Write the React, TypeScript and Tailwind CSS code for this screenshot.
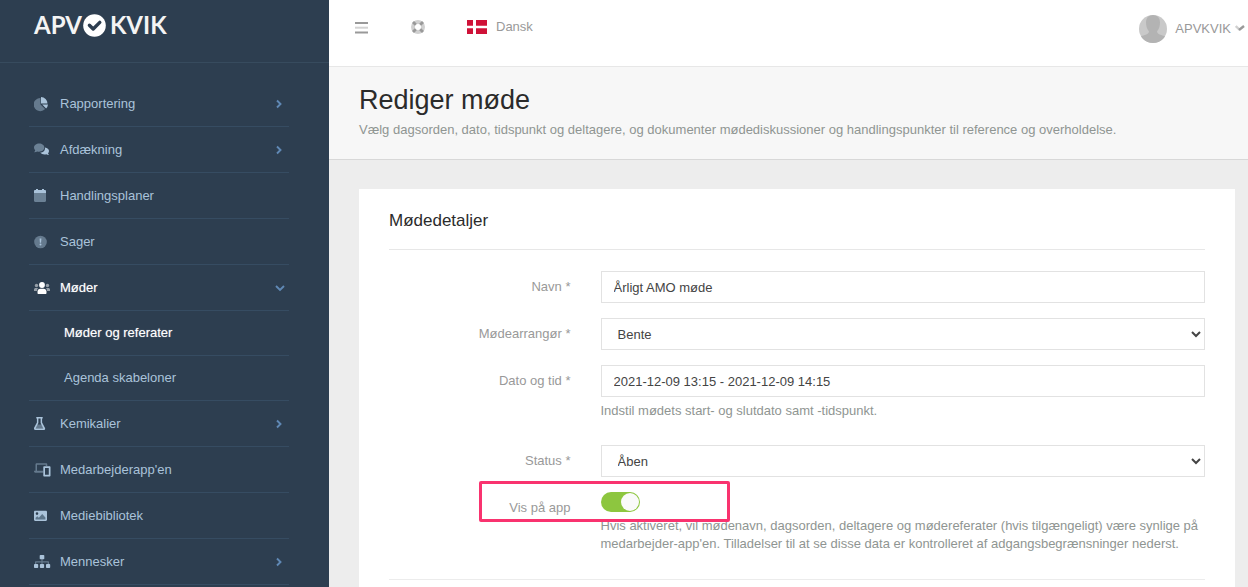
import React, { useState } from "react";

interface NavItem {
  label: string;
  icon?: React.ReactNode;
  arrow?: "right" | "down";
  active?: boolean;
  sub?: boolean;
}

const icon = {
  width: 18,
  height: 16,
  viewBox: "0 0 18 16",
  fill: "currentColor",
  "aria-hidden": true,
};

const PieIcon = () => (
  <svg {...icon}>
    <path opacity="0.45" d="M6.5 2v6.5l4.6 4.6A6.6 6.6 0 1 1 6.5 2z" />
    <path d="M7 1a6.500 6.500 0 0 1 6.500 6.500H7z" />
    <path d="M8.200 8.600h5.800a6.200 6.200 0 0 1-1.900 3.900z" />
  </svg>
);

const CommentsIcon = () => (
  <svg {...icon}>
    <path d="M11 5.400c2.300.3 4 1.800 4 3.700 0 .9-.4 1.700-1 2.300.2.600.6 1.100 1.100 1.600-1 .1-2-.2-2.800-.7-2.400.6-4.900-.1-6-1.700 3-.1 5-2.200 4.700-5.200z" />
    <path
      opacity="0.5"
      d="M5.200 1.500c2.900 0 5.200 1.800 5.200 4.100S8.100 9.700 5.200 9.700c-.7 0-1.400-.1-2-.3-.8.6-1.900.9-3.100.8.6-.6 1-1.200 1.100-1.900C.4 7.600 0 6.600 0 5.600c0-2.300 2.300-4.100 5.200-4.100z"
    />
  </svg>
);

const CalendarIcon = () => (
  <svg {...icon}>
    <path opacity="0.5" d="M0 5h12v7.800c0 .7-.5 1.200-1.200 1.200H1.200C.5 14 0 13.500 0 12.800z" />
    <path d="M0 5V3.200C0 2.500.5 2 1.200 2H2V1h2v1h4V1h2v1h.8c.7 0 1.200.5 1.200 1.200V5z" />
  </svg>
);

const AlertIcon = () => (
  <svg {...icon}>
    <circle opacity="0.45" cx="6.500" cy="8" r="6.300" />
    <path d="M5.600 4.500h1.800l-.3 4.200H5.900z" />
    <circle cx="6.500" cy="10.500" r="1" />
  </svg>
);

const UsersIcon = () => (
  <svg {...icon}>
    <g opacity="0.5">
      <circle cx="2.500" cy="5.500" r="1.700" />
      <circle cx="13.500" cy="5.500" r="1.700" />
      <path d="M0 11V9.500C0 8.500.8 8 1.600 8h1.800l.7.300C3.200 9 3 10 2.900 11z" />
      <path d="M16 11V9.500c0-1-.8-1.500-1.600-1.500h-1.800l-.7.300c.9.700 1.100 1.700 1.200 2.700z" />
    </g>
    <circle cx="8" cy="5" r="2.900" />
    <path d="M3.500 13v-1.500c0-1.700 1.300-2.800 2.800-2.800h3.400c1.500 0 2.800 1.100 2.800 2.800V13c0 .6-.4 1-1 1h-7c-.6 0-1-.4-1-1z" />
  </svg>
);

const FlaskIcon = () => (
  <svg {...icon}>
    <path opacity="0.45" d="M3.500 8.500h4.300l2 4.200H1.500z" />
    <path
      fillRule="evenodd"
      d="M2.300 1h6.400v1.600h-.6v4l2.800 5.200c.7 1.200-.1 2.200-1.300 2.200H1.400c-1.200 0-2-1-1.300-2.200l2.800-5.200v-4h-.6zM4.400 2.600V7L1.700 12.400h7.600L6.600 7V2.600z"
    />
  </svg>
);

const DevicesIcon = () => (
  <svg {...icon}>
    <path
      opacity="0.45"
      d="M1.500 8.700V2.500C1.500 1.700 2 1.200 2.800 1.200h9.200c.8 0 1.300.5 1.300 1.300V4h-1.600V2.800H3v5.900h6.200v2.100H1.600C.7 10.800 0 10 0 9.200v-.5z"
    />
    <path
      fillRule="evenodd"
      d="M10.300 4.300h5.200c.6 0 1 .4 1 1v8.200c0 .6-.4 1-1 1h-5.200c-.6 0-1-.4-1-1V5.300c0-.6.4-1 1-1zM11 6v6.800h3.800V6z"
    />
  </svg>
);

const ImageIcon = () => (
  <svg {...icon}>
    <path
      fillRule="evenodd"
      d="M1.200 2.800h10.600c.7 0 1.200.5 1.200 1.200v7.800c0 .7-.5 1.200-1.200 1.200H1.200C.5 13 0 12.500 0 11.800V4c0-.7.5-1.200 1.200-1.200zM3 4.300a1.300 1.300 0 1 0 0 2.600 1.300 1.300 0 0 0 0-2.600z"
    />
    <path fill="#5d768b" d="M1.600 11.400V9.800l1.700-1.600 1.500 1.500 3.400-3.600 3.200 3.300v2z" />
  </svg>
);

const SitemapIcon = () => (
  <svg {...icon}>
    <path opacity="0.45" d="M7.400 5h1.200v2.300H14c.6 0 1 .4 1 1V10h-1.300V8.500H8.600V10H7.400V8.500H2.300V10H1V8.300c0-.6.400-1 1-1h5.400z" />
    <rect x="5.700" y="1" width="4.600" height="4.300" rx="0.800" />
    <rect x="0" y="10" width="4.200" height="4" rx="0.800" />
    <rect x="5.900" y="10" width="4.200" height="4" rx="0.800" />
    <rect x="12" y="10" width="4.200" height="4" rx="0.800" />
  </svg>
);

const NAV_ITEMS: NavItem[] = [
  { label: "Rapportering", icon: <PieIcon />, arrow: "right" },
  { label: "Afdækning", icon: <CommentsIcon />, arrow: "right" },
  { label: "Handlingsplaner", icon: <CalendarIcon /> },
  { label: "Sager", icon: <AlertIcon /> },
  { label: "Møder", icon: <UsersIcon />, arrow: "down", active: true },
  { label: "Møder og referater", active: true, sub: true },
  { label: "Agenda skabeloner", sub: true },
  { label: "Kemikalier", icon: <FlaskIcon />, arrow: "right" },
  { label: "Medarbejderapp'en", icon: <DevicesIcon /> },
  { label: "Mediebibliotek", icon: <ImageIcon /> },
  { label: "Mennesker", icon: <SitemapIcon />, arrow: "right" },
];

function Arrow({ direction }: { direction: "right" | "down" }) {
  return (
    <svg
      width="10"
      height="10"
      viewBox="0 0 10 10"
      fill="none"
      stroke="#6089b5"
      strokeWidth="1.900"
      className="shrink-0"
      aria-hidden
    >
      <path d={direction === "right" ? "M2 1.500 5.500 5 2 8.500" : "M1 3 5 7 9 3"} />
    </svg>
  );
}

function Logo() {
  return (
    <a
      href="#"
      className="flex items-center font-[Lato,sans-serif] text-2xl leading-8 font-bold text-[#f4f4f4]"
    >
      APV
      <svg width="23" height="23" viewBox="0 0 23 23" className="mx-px" aria-hidden>
        <circle cx="11.500" cy="11.500" r="11.300" fill="#fff" />
        <path
          d="m6.400 11.200 3.800 3.800 6.600-6.600"
          fill="none"
          stroke="#2d3e50"
          strokeWidth="3.400"
          strokeLinecap="round"
          strokeLinejoin="round"
        />
      </svg>
      <span className="ml-[3px]">KVIK</span>
    </a>
  );
}

function Sidebar() {
  return (
    <aside className="w-[329px] shrink-0 bg-[#2d3e50]">
      <div className="border-b border-[#374b5e] px-[34px] pt-[9px] pb-[21px]">
        <Logo />
      </div>
      <nav className="pt-[18px] pr-10 pl-[29px]">
        <ul>
          {NAV_ITEMS.map((item) => (
            <li key={item.label} className="border-b border-[#364c62]">
              <a
                href="#"
                className={`flex items-center pr-1 ${
                  item.sub ? "h-11 pl-[35px]" : "h-[45px] pl-[5px]"
                } ${item.active ? "text-white [text-shadow:0_0_1px_#ffffff80]" : "text-[#aac3da]"}`}
              >
                {item.icon && <span className="w-[26px] shrink-0">{item.icon}</span>}
                <span className="grow">{item.label}</span>
                {item.arrow && <Arrow direction={item.arrow} />}
              </a>
            </li>
          ))}
        </ul>
      </nav>
    </aside>
  );
}

function TopBar() {
  return (
    <header className="flex items-start justify-between border-b border-[#e7e7e7] bg-white pr-[3px] pb-[23px] pl-[26px] text-[#999]">
      <div className="flex items-center pt-[17px]">
        <button type="button" aria-label="Menu" className="mr-[42px]">
          <svg width="14" height="14" viewBox="0 0 14 14" aria-hidden>
            <path d="M0 3h13M0 12.500h13" stroke="#999" strokeWidth="2" />
            <path d="M0 7.700h13" stroke="#d3d3d3" strokeWidth="2" />
          </svg>
        </button>
        <button type="button" aria-label="Hjælp" className="mr-[42px]">
          <svg width="14" height="14" viewBox="0 0 14 14" fill="none" aria-hidden>
            <circle cx="7" cy="7" r="5" stroke="#d0d0d0" strokeWidth="4" />
            <path
              d="m2 2 2.800 2.800M12 2 9.200 4.800M2 12l2.800-2.800M12 12 9.200 9.200"
              stroke="#999"
              strokeWidth="2.800"
            />
          </svg>
        </button>
        <button type="button" className="flex items-center gap-[9px] leading-5">
          <svg width="20" height="14" viewBox="0 0 20 14" aria-hidden>
            <path fill="#cf1238" d="M0 0h20v14H0z" />
            <path fill="#fff" d="M6 0h3v14H6zM0 5.800h20v2.400H0z" />
          </svg>
          Dansk
        </button>
      </div>
      <button type="button" className="flex items-center gap-1 pt-[15px]">
        <svg width="28" height="28" viewBox="0 0 28 28" className="mr-1" aria-hidden>
          <defs>
            <clipPath id="avatar">
              <circle cx="14" cy="14" r="14" />
            </clipPath>
          </defs>
          <g clipPath="url(#avatar)">
            <path fill="#c9c9c9" d="M0 0h28v28H0z" />
            <path
              fill="#b3b3b3"
              d="M14 0c4.500 0 7 3 7 7.500 0 3.500-1 6.500-3 9 .2 2.500 3.500 3.500 6.500 4.200l3.500 1.300v6H0v-6l3.500-1.300c3-.7 6.300-1.700 6.500-4.200-2-2.500-3-5.500-3-9C7 3 9.500 0 14 0z"
            />
          </g>
        </svg>
        APVKVIK
        <svg width="10" height="10" viewBox="0 0 10 10" fill="none" strokeWidth="2.400" aria-hidden>
          <path d="m.8 2 4 4" stroke="#d0d0d0" />
          <path d="m4 6 5-4" stroke="#999" />
        </svg>
      </button>
    </header>
  );
}

interface FieldProps {
  id: string;
  label: string;
  help?: string;
  children: React.ReactNode;
}

function Field({ id, label, help, children }: FieldProps) {
  return (
    <div className="-mx-[15px] flex">
      <label htmlFor={id} className="w-1/4 px-[15px] pt-[7px] text-right leading-[18px] text-[#999]">
        {label}
      </label>
      <div className="w-3/4 px-[15px]">
        {children}
        {help && <p className="mt-[5px] leading-[18px] text-[#8f9592]">{help}</p>}
      </div>
    </div>
  );
}

const controlClass =
  "block h-8 w-full rounded-none border border-[#e2e2e2] bg-white px-3 text-[#444] outline-none";

function MeetingForm() {
  const [visible, setVisible] = useState(true);

  return (
    <form className="pt-[21px]">
      <div className="space-y-[15px]">
        <Field id="name" label="Navn *">
          <input id="name" type="text" defaultValue="Årligt AMO møde" className={controlClass} />
        </Field>
        <Field id="organizer" label="Mødearrangør *">
          <select id="organizer" className={controlClass}>
            <option>Bente</option>
          </select>
        </Field>
        <Field id="date" label="Dato og tid *" help="Indstil mødets start- og slutdato samt -tidspunkt.">
          <input
            id="date"
            type="text"
            defaultValue="2021-12-09 13:15 - 2021-12-09 14:15"
            className={controlClass}
          />
        </Field>
      </div>
      <div className="pt-[25px]">
        <Field id="status" label="Status *">
          <select id="status" className={controlClass}>
            <option>Åben</option>
          </select>
        </Field>
      </div>
      <div className="relative pt-[15px]">
        <Field
          id="visible"
          label="Vis på app"
          help="Hvis aktiveret, vil mødenavn, dagsorden, deltagere og mødereferater (hvis tilgængeligt) være synlige på medarbejder-app'en. Tilladelser til at se disse data er kontrolleret af adgangsbegrænsninger nederst."
        >
          <input
            id="visible"
            type="checkbox"
            role="switch"
            checked={visible}
            onChange={(e) => setVisible(e.target.checked)}
            className="flex h-5 w-[39px] appearance-none items-center rounded-full bg-[#ccc] px-px before:size-[18px] before:rounded-full before:bg-[#fafafa] checked:justify-end checked:bg-[#8dc63f]"
          />
        </Field>
        {/* Callout frame around the switch */}
        <div className="pointer-events-none absolute top-1 left-[90px] h-[41px] w-[251px] rounded-xs border-3 border-[#f9336f]" />
      </div>
      <hr className="mt-[26px] border-[#ececec]" />
    </form>
  );
}

export default function App() {
  return (
    <div className="flex h-screen overflow-hidden bg-[#ededed] font-['Liberation_Sans',Arial,sans-serif] text-[13px] leading-[18px]">
      <Sidebar />
      <div className="flex min-w-0 grow flex-col">
        <TopBar />
        <div className="border-b border-[#d8d8d8] bg-[#f7f7f7] px-[30px] pt-[15px] pb-5">
          <h1 className="text-[27px] leading-9 text-[#2b2b2b]">Rediger møde</h1>
          <p className="pt-[3px] text-[#8f9592]">
            Vælg dagsorden, dato, tidspunkt og deltagere, og dokumenter mødediskussioner og
            handlingspunkter til reference og overholdelse.
          </p>
        </div>
        <main className="flex grow flex-col pt-[29px] pr-[13px] pl-[30px]">
          <section className="grow bg-white px-[30px]">
            <h2 className="border-b border-[#e7e7e7] pt-5 pb-4 text-[17px] leading-6 text-[#2b2b2b]">
              Mødedetaljer
            </h2>
            <MeetingForm />
          </section>
        </main>
      </div>
    </div>
  );
}
